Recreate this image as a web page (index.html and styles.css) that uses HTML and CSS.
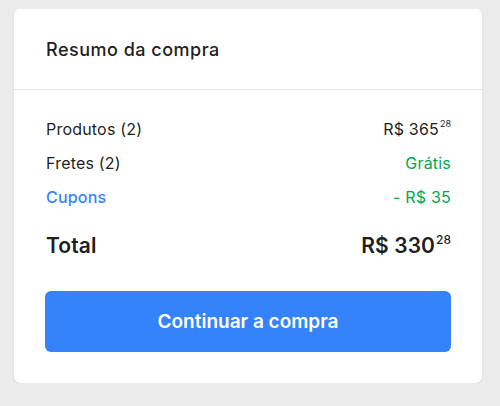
FILE: index.html
```html
<!DOCTYPE html>
<html lang="pt-BR">
<head>
<meta charset="utf-8">
<link rel="stylesheet" href="styles.css">
</head>
<body>
<section class="card">
  <header class="card-header">
    <h2 class="title">Resumo da compra</h2>
  </header>
  <div class="card-body">
    <div class="row">
      <span>Produtos (2)</span>
      <span>R$ 365<sup>28</sup></span>
    </div>
    <div class="row">
      <span>Fretes (2)</span>
      <span class="green">Grátis</span>
    </div>
    <div class="row">
      <span class="blue">Cupons</span>
      <span class="green">- R$ 35</span>
    </div>
    <div class="row total">
      <span>Total</span>
      <span>R$ 330<sup>28</sup></span>
    </div>
    <button class="btn">Continuar a compra</button>
  </div>
</section>
</body>
</html>
```
FILE: styles.css
```css
* { box-sizing: border-box; }
html, body { margin: 0; padding: 0; }
body {
  background: #ebebeb;
  font-family: "Inter", "Open Sans", sans-serif;
  color: rgba(0,0,0,.9);
  padding: 9px 18px 0 14px;
}
.card {
  background: #fff;
  border-radius: 6px;
  box-shadow: 0 1px 2px rgba(0,0,0,.12);
  width: 468px;
}
.card-header {
  height: 81px;
  border-bottom: 1px solid #e6e6e6;
  padding: 0 32px;
  display: flex;
  align-items: center;
}
.title {
  margin: 0;
  font-size: 18px;
  font-weight: 500;
  letter-spacing: 0.5px;
}
.card-body {
  padding: 22px 31px 31px 32px;
}
.row {
  display: flex;
  justify-content: space-between;
  align-items: center;
  font-size: 16px;
  letter-spacing: 0.2px;
  height: 34px;
}
.row span { line-height: 20px; }
sup {
  font-size: 9px;
  vertical-align: baseline;
  line-height: 1;
  position: relative;
  top: -8px;
  margin-left: 1px;
  letter-spacing: 0;
}
.green { color: #00a650; }
.blue { color: #3483fa; font-weight: 500; }
.row.total {
  margin-top: 16px;
  font-size: 21px;
  font-weight: 600;
  letter-spacing: 0.1px;
  height: 32px;
}
.row.total span { line-height: 26px; }
.row.total sup { font-size: 12px; font-weight: 500; top: -9px; }
.btn {
  margin-top: 29px;
  width: 406px;
  height: 61px;
  border: 0;
  border-radius: 6px;
  background: #3483fa;
  color: #fff;
  font-family: inherit;
  font-size: 19px;
  font-weight: 600;
  margin-left: -1px;
  display: block;
}
```
